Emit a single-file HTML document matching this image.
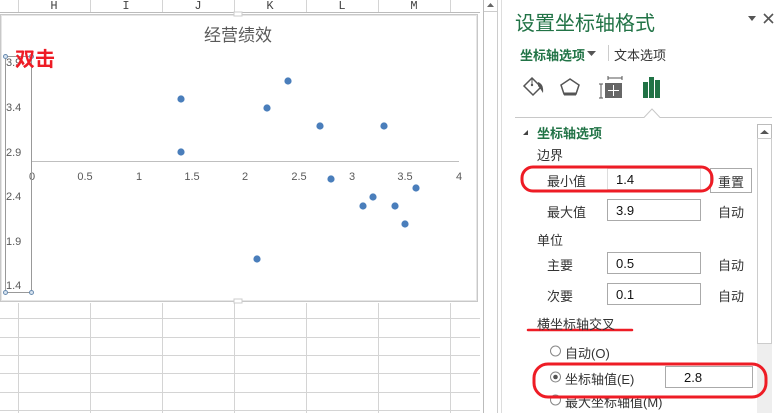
<!DOCTYPE html>
<html><head><meta charset="utf-8">
<style>
*{margin:0;padding:0;box-sizing:border-box}
body{width:779px;height:413px;overflow:hidden;background:#fff;font-family:"Liberation Sans","Noto Sans CJK SC",sans-serif;position:relative}
.a{position:absolute;white-space:nowrap}
.lab{font-size:13px;color:#333}
.inp{position:absolute;border:1px solid #aaa;background:#fff;font-size:13px;color:#111;padding:3px 0 0 8px;height:22px}
.auto{font-size:13px;color:#333}
</style></head><body>
<svg class="a" style="left:0;top:0" width="480" height="413">
 <rect x="0" y="0" width="480" height="12" fill="#fff"/>
 <line x1="0" y1="12.5" x2="480" y2="12.5" stroke="#bbb"/>
 <g stroke="#d4d4d4">
  <line x1="18.5" y1="0" x2="18.5" y2="12"/><line x1="90.5" y1="0" x2="90.5" y2="12"/><line x1="162.5" y1="0" x2="162.5" y2="12"/><line x1="234.5" y1="0" x2="234.5" y2="12"/><line x1="306.5" y1="0" x2="306.5" y2="12"/><line x1="378.5" y1="0" x2="378.5" y2="12"/><line x1="450.5" y1="0" x2="450.5" y2="12"/>
 </g>
 <g font-family="Liberation Mono,monospace" font-size="12" fill="#444" text-anchor="middle">
  <text x="54" y="9">H</text><text x="126" y="9">I</text><text x="198" y="9">J</text><text x="270" y="9">K</text><text x="342" y="9">L</text><text x="414" y="9">M</text>
 </g>
 <g stroke="#d4d4d4">
  <line x1="0" y1="318.5" x2="480" y2="318.5"/><line x1="0" y1="337.5" x2="480" y2="337.5"/><line x1="0" y1="355.5" x2="480" y2="355.5"/><line x1="0" y1="373.5" x2="480" y2="373.5"/><line x1="0" y1="392.5" x2="480" y2="392.5"/><line x1="0" y1="410.5" x2="480" y2="410.5"/>
  <line x1="18.5" y1="303" x2="18.5" y2="413"/><line x1="90.5" y1="303" x2="90.5" y2="413"/><line x1="162.5" y1="303" x2="162.5" y2="413"/><line x1="234.5" y1="303" x2="234.5" y2="413"/><line x1="306.5" y1="303" x2="306.5" y2="413"/><line x1="378.5" y1="303" x2="378.5" y2="413"/><line x1="450.5" y1="303" x2="450.5" y2="413"/>
 </g>
 <rect x="0.5" y="14.5" width="477" height="287" fill="#fff" stroke="#c8c8c8"/>
 <rect x="1.5" y="15.5" width="475" height="285" fill="none" stroke="#e6e6e6"/>
 <rect x="234" y="12" width="8" height="4" fill="#fff" stroke="#ccc"/>
 <rect x="234" y="299" width="8" height="4" fill="#fff" stroke="#ccc"/>
 <text x="238" y="41" font-size="17" fill="#595959" text-anchor="middle" font-family="Noto Sans CJK SC,sans-serif">经营绩效</text>
 <line x1="32" y1="161.5" x2="459" y2="161.5" stroke="#bfbfbf"/>
 <g font-size="11" fill="#595959" text-anchor="middle">
  <text x="32" y="180">0</text><text x="85" y="180">0.5</text><text x="139" y="180">1</text><text x="192" y="180">1.5</text><text x="245" y="180">2</text><text x="299" y="180">2.5</text><text x="352" y="180">3</text><text x="405" y="180">3.5</text><text x="459" y="180">4</text>
 </g>
 <g font-size="11" fill="#595959">
  <text x="6" y="66">3.9</text><text x="6" y="111">3.4</text><text x="6" y="156">2.9</text><text x="6" y="200">2.4</text><text x="6" y="245">1.9</text><text x="6" y="289">1.4</text>
 </g>
 <rect x="5.5" y="56.5" width="26" height="236" fill="none" stroke="#999"/>
 <g fill="#d8e4f0" stroke="#6a8cb0" stroke-width="1">
  <circle cx="5.5" cy="56.5" r="2"/><circle cx="31.5" cy="56.5" r="2"/><circle cx="5.5" cy="292.5" r="2"/><circle cx="31.5" cy="292.5" r="2"/>
 </g>
 <text x="15" y="66" font-size="20" font-weight="bold" fill="#ee1c25" font-family="Noto Sans CJK SC,sans-serif">双击</text>
 <g fill="#4a7ebb">
  <circle cx="181" cy="99" r="3.6"/><circle cx="181" cy="152" r="3.6"/><circle cx="267" cy="108" r="3.6"/><circle cx="288" cy="81" r="3.6"/><circle cx="320" cy="126" r="3.6"/><circle cx="384" cy="126" r="3.6"/><circle cx="331" cy="179" r="3.6"/><circle cx="363" cy="206" r="3.6"/><circle cx="373" cy="197" r="3.6"/><circle cx="395" cy="206" r="3.6"/><circle cx="416" cy="188" r="3.6"/><circle cx="405" cy="224" r="3.6"/><circle cx="257" cy="259" r="3.6"/>
 </g>
</svg>

<svg class="a" style="left:480px;top:0" width="299" height="413">
 <rect x="0" y="0" width="299" height="413" fill="#fff"/>
 <line x1="3.5" y1="0" x2="3.5" y2="413" stroke="#bbb"/>
 <line x1="17.5" y1="0" x2="17.5" y2="413" stroke="#ccc"/>
 <line x1="21.5" y1="0" x2="21.5" y2="413" stroke="#ddd"/>
 <line x1="4" y1="11.5" x2="17" y2="11.5" stroke="#ccc"/>
 <path d="M7 7 L10.5 3 L14 7Z" fill="#666"/>
 <path d="M268 16 L276 16 L272 21Z" fill="#555"/>
 <path d="M284 14 L293 23 M293 14 L284 23" stroke="#555" stroke-width="1.6"/>
 <line x1="128.5" y1="45" x2="128.5" y2="61" stroke="#ccc"/>
 <path d="M107 51 L116 51 L111.5 56Z" fill="#555"/>
 <path d="M52 78 L61 87 L53 95 L44 86Z" fill="none" stroke="#555" stroke-width="1.5"/>
 <path d="M52 78 L52 84" stroke="#555"/><circle cx="52" cy="85" r="1.2" fill="#555"/>
 <path d="M58 82 Q64 84 63 93 Q60 88 58 86Z" fill="#555"/>
 <path d="M90 79 L99 85 L96 94 L84 94 L81 85Z" fill="none" stroke="#555" stroke-width="1.5"/>
 <line x1="84" y1="94" x2="96" y2="94" stroke="#555" stroke-width="3"/>
 <path d="M121 84 L121 98 M119 84 L123 84 M119 98 L123 98 M128 78 L142 78 M128 76 L128 80 M142 76 L142 80" stroke="#555" stroke-width="1"/>
 <rect x="125" y="83" width="17" height="15" fill="#666"/>
 <path d="M133.5 85 L133.5 96 M128 90.5 L139 90.5" stroke="#fff" stroke-width="1"/>
 <rect x="163" y="82" width="5" height="16" fill="#217346"/>
 <rect x="169" y="77" width="5" height="21" fill="#217346"/>
 <rect x="175" y="80" width="5" height="18" fill="#217346"/>
 <path d="M35 117.5 L164 117.5 L172 109 L180 117.5 L292 117.5" fill="none" stroke="#c8c8c8"/>
 <rect x="277.5" y="124.5" width="14" height="219" fill="#fff" stroke="#bbb"/>
 <rect x="277.5" y="138.5" width="14" height="205" fill="#fff" stroke="#ccc"/>
 <rect x="277" y="344" width="15" height="69" fill="#eee"/>
 <path d="M280 134 L284.5 130 L289 134Z" fill="#555"/>
 <path d="M43 135 L48 130 L48 135Z" fill="#444"/>
 <line x1="48" y1="330" x2="152" y2="330" stroke="#ee1c25" stroke-width="2.5" stroke-linecap="round"/>
 <circle cx="75.5" cy="351" r="5" fill="#fff" stroke="#888"/>
 <circle cx="75.5" cy="377" r="5" fill="#fff" stroke="#888"/><circle cx="75.5" cy="377" r="2.3" fill="#555"/>
 <circle cx="75.5" cy="400" r="5" fill="#fff" stroke="#888"/>
</svg>

<div class="a" style="left:515px;top:8px;font-size:20px;color:#217346;font-family:'Noto Sans CJK SC',sans-serif;line-height:28px">设置坐标轴格式</div>
<div class="a" style="left:520px;top:45px;font-size:13px;font-weight:bold;color:#217346">坐标轴选项</div>
<div class="a" style="left:614px;top:45px;font-size:13px;color:#333">文本选项</div>
<div class="a" style="left:537px;top:123px;font-size:13px;font-weight:bold;color:#217346">坐标轴选项</div>
<div class="a lab" style="left:537px;top:145px">边界</div>
<div class="a lab" style="left:547px;top:171px">最小值</div>
<div class="inp" style="left:607px;top:168px;width:94px;border-color:#ddd">1.4</div>
<div class="a" style="left:710px;top:168px;width:42px;height:25px;border:1px solid #aaa;font-size:13px;color:#333;text-align:center;padding-top:3px">重置</div>
<div class="a lab" style="left:547px;top:202px">最大值</div>
<div class="inp" style="left:607px;top:199px;width:94px">3.9</div>
<div class="a auto" style="left:718px;top:202px">自动</div>
<div class="a lab" style="left:537px;top:230px">单位</div>
<div class="a lab" style="left:547px;top:255px">主要</div>
<div class="inp" style="left:607px;top:252px;width:94px">0.5</div>
<div class="a auto" style="left:718px;top:255px">自动</div>
<div class="a lab" style="left:547px;top:286px">次要</div>
<div class="inp" style="left:607px;top:283px;width:94px">0.1</div>
<div class="a auto" style="left:718px;top:286px">自动</div>
<div class="a lab" style="left:537px;top:314px">横坐标轴交叉</div>
<div class="a lab" style="left:565px;top:343px">自动(O)</div>
<div class="a lab" style="left:565px;top:369px">坐标轴值(E)</div>
<div class="inp" style="left:665px;top:366px;width:88px;padding-left:18px">2.8</div>
<div class="a lab" style="left:565px;top:392px">最大坐标轴值(M)</div>

<svg class="a" style="left:0;top:0" width="779" height="413">
 <rect x="522" y="167" width="190" height="24" rx="11" fill="none" stroke="#ee1c25" stroke-width="3"/>
 <rect x="534" y="364" width="232" height="33" rx="14" fill="none" stroke="#ee1c25" stroke-width="3"/>
</svg>
</body></html>
